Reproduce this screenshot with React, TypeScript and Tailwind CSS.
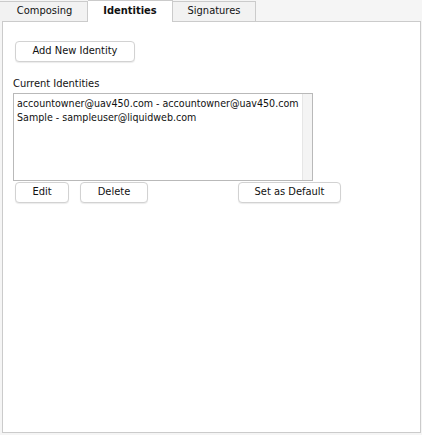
const tabs = ["Composing", "Identities", "Signatures"];

const identities = [
  "accountowner@uav450.com - accountowner@uav450.com",
  "Sample - sampleuser@liquidweb.com",
];

const Btn = ({ label, className }: { label: string; className: string }) => (
  <button
    className={`h-[21px] rounded-[4px] border border-[#d2d2d2] bg-white text-[11px] text-[#111] shadow-[0_1px_1px_rgba(0,0,0,0.08)] ${className}`}
  >
    {label}
  </button>
);

const App = (): JSX.Element => {
  return (
    <div className="w-[422px] h-[435px] bg-[#f5f5f5] font-['DejaVu_Sans_Condensed','Liberation_Sans',sans-serif] text-[11px] text-[#111]">
      {/* tabs */}
      <div className="flex items-end h-[21px]">
        <div className="w-[88px] h-[20px] border-t border-r border-[#cbcbcb] bg-[#f2f2f2] flex items-center justify-center pl-[2px]">
          {tabs[0]}
        </div>
        <div className="relative z-10 w-[85px] h-[22px] -mb-px border-t border-r border-[#cbcbcb] bg-white flex items-center justify-center font-bold pb-[1px]">
          {tabs[1]}
        </div>
        <div className="w-[83px] h-[20px] border-t border-r border-[#cbcbcb] bg-[#f2f2f2] flex items-center justify-center">
          {tabs[2]}
        </div>
      </div>

      {/* panel */}
      <div className="ml-[2px] w-[419px] h-[412px] border border-[#cbcbcb] bg-white pt-[19px] pl-[10px]">
        <Btn label="Add New Identity" className="ml-[2px] w-[120px]" />
        <div className="mt-[15px] leading-[14px]">Current Identities</div>
        <div className="mt-[2px] w-[300px] h-[88px] border border-[#b9b9b9] flex">
          <div className="flex-1 pl-[3px] pt-[2px] text-[10.6px] leading-[14px] whitespace-nowrap">
            {identities.map((item) => (
              <div key={item}>{item}</div>
            ))}
          </div>
          <div className="w-[10px] h-full bg-[#f4f4f4] border-l border-[#e6e6e6]" />
        </div>
        <div className="flex mt-[1px] pl-[2px]">
          <Btn label="Edit" className="w-[54px]" />
          <Btn label="Delete" className="ml-[11px] w-[68px]" />
          <Btn label="Set as Default" className="ml-[90px] w-[103px]" />
        </div>
      </div>
    </div>
  );
};

export default App;
